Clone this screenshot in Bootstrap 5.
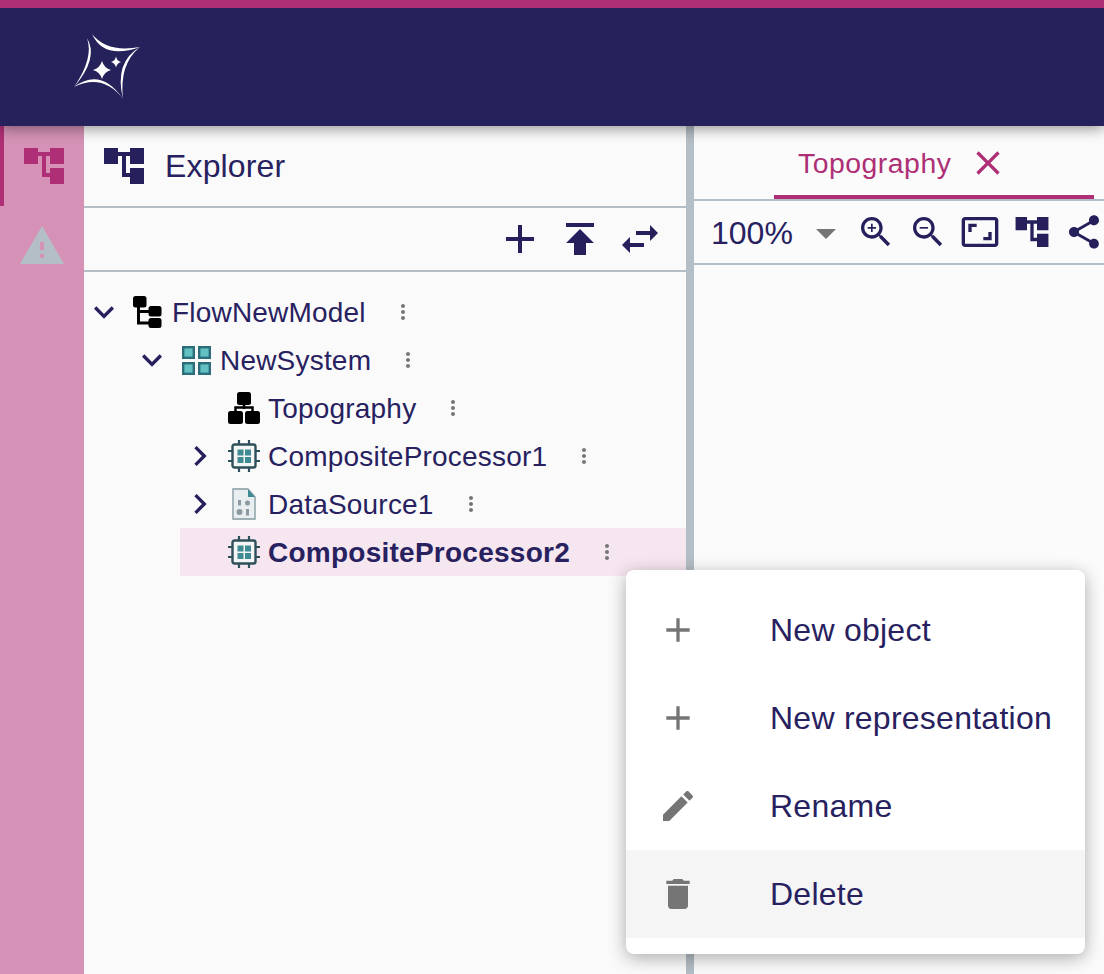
<!DOCTYPE html>
<html lang="en">
<head>
  <meta charset="UTF-8">
  <title>Explorer</title>
  <link href="https://cdn.jsdelivr.net/npm/bootstrap@5.3.2/dist/css/bootstrap.min.css" rel="stylesheet">
  <style>
    body {
      font-family: "Liberation Sans", Arial, sans-serif;
      color: #272160;
      background: #fafafa;
    }
    svg { display: block; flex: none; }
    .ico-navy { fill: #25205c; }
    .ico-grey { fill: #757575; }

    .app-header {
      height: 126px;
      flex: none;
      background: #25215a;
      border-top: 8px solid #ae2f76;
      padding-left: 74px;
      position: relative;
      z-index: 5;
      box-shadow: 0 2px 14px rgba(0, 0, 0, .45);
    }

    .app-rail { width: 84px; flex: none; background: #d592b6; }
    .rail-item { height: 80px; }
    .rail-item.active { border-left: 4px solid #ae2f76; }
    .rail-item.active svg { fill: #ae2f76; }

    .explorer-pane { width: 602px; flex: none; background: #fafafa; }
    .pane-title { height: 82px; border-bottom: 2px solid #b4bec6; padding-left: 20px; gap: 21px; font-size: 32px; letter-spacing: .15px; }
    .pane-tools { height: 64px; border-bottom: 2px solid #b4bec6; padding-right: 22px; gap: 12px; }

    .tree-list { padding-top: 16px; }
    .tree-row { height: 48px; font-size: 28px; letter-spacing: .2px; white-space: nowrap; }
    .tree-d1 { margin-left: 48px; }
    .tree-d2 { margin-left: 96px; }
    .tree-row.selected { background: #f6e6f0; font-weight: 700; letter-spacing: .25px; }
    .tree-twist { width: 40px; flex: none; }
    .tree-ico { width: 48px; flex: none; }
    .tree-label { margin-top: 2px; }
    .tree-more { margin-left: 25px; fill: #757575; }

    .pane-splitter { width: 8px; flex: none; background: #b4bec6; }

    .editor-pane { flex: 1 1 auto; min-width: 0; background: #fbfbfc; }
    .tab-strip { height: 75px; border-bottom: 2px solid #b4bec6; padding-left: 80px; }
    .editor-tab {
      width: 320px;
      height: 73px;
      border-bottom: 4px solid #ae2f76;
      color: #ae2f76;
      fill: #ae2f76;
      font-size: 28.4px;
      letter-spacing: .5px;
      padding-left: 24px;
      padding-top: 5px;
      gap: 17px;
    }
    .zoom-tools { height: 64px; border-bottom: 2px solid #b4bec6; padding-left: 17px; font-size: 32px; }
    .zoom-value { margin-top: 2px; }
    .zoom-caret { width: 0; height: 0; border-left: 10px solid transparent; border-right: 10px solid transparent; border-top: 10px solid #757575; margin: 4px 20px 0 23px; }
    .zoom-btns { gap: 12px; }

    .context-menu.dropdown-menu {
      left: 626px;
      top: 444px;
      width: 459px;
      padding: 16px 0;
      border: 0;
      border-radius: 8px;
      background: #fff;
      box-shadow: 0 4px 18px rgba(0, 0, 0, .32);
      z-index: 10;
    }
    .context-menu .dropdown-item {
      height: 88px;
      padding: 0 0 0 32px;
      gap: 72px;
      font-size: 32px;
      letter-spacing: .25px;
      color: #272160;
    }
    .context-menu .dropdown-item.hovered { background: #f5f5f5; }
  </style>
</head>
<body class="d-flex flex-column vh-100 overflow-hidden">
  <svg width="0" height="0" class="position-absolute">
    <defs>
      <symbol id="i-topo" viewBox="0 0 40 36">
        <path d="M0 0h14v16H0zM26 0h14v16H26zM26 20h14v16H26zM14 4h12v4h-4v17h4v4h-8V8h-4z"/>
      </symbol>
      <symbol id="i-chip" viewBox="0 0 32 32">
        <path d="M11 0v5M21 0v5M11 27v5M21 27v5M0 11h5M0 21h5M27 11h5M27 21h5" stroke="#2f4f5a" stroke-width="2.200" fill="none"/>
        <rect x="4.500" y="4.500" width="23" height="23" rx="2" fill="#f4f6f6" stroke="#2f4f5a" stroke-width="2.400"/>
        <path d="M9.500 9.500h6v6h-6zM17 9.500h6v6h-6zM9.500 17h6v6h-6zM17 17h6v6h-6z" fill="#3f8a93"/>
      </symbol>
    </defs>
  </svg>

  <header class="app-header d-flex align-items-center">
    <svg width="66" height="66" viewBox="0 0 66 66" fill="#fff">
      <path d="M18 0Q30 26 66 13Q33 19 18 0z"/>
      <path d="M66 13Q40 28 49 65Q45 30 66 13z"/>
      <path d="M49 65Q29 39 0 53Q27 33 49 65z"/>
      <path d="M0 53Q20 24 13 4Q25 24 0 53z"/>
      <path d="M28 27Q30 34 37 36Q30 38 28 45Q26 38 19 36Q26 34 28 27z"/>
      <path d="M42 22.500Q43 27 47 28Q43 29 42 33.500Q41 29 37 28Q41 27 42 22.500z"/>
    </svg>
  </header>

  <main class="d-flex flex-grow-1 position-relative" style="min-height:0">
    <nav class="app-rail">
      <div class="rail-item active d-flex align-items-center justify-content-center">
        <svg width="40" height="36"><use href="#i-topo"/></svg>
      </div>
      <div class="rail-item d-flex align-items-center justify-content-center">
        <svg width="48" height="48" viewBox="0 0 24 24" fill="#b4bec6"><path d="M1 21h22L12 2 1 21zm12-3h-2v-2h2v2zm0-4h-2v-4h2v4z"/></svg>
      </div>
    </nav>

    <section class="explorer-pane">
      <div class="pane-title d-flex align-items-center">
        <svg width="40" height="36" class="ico-navy"><use href="#i-topo"/></svg>
        <span>Explorer</span>
      </div>
      <div class="pane-tools d-flex align-items-center justify-content-end">
        <svg width="48" height="48" viewBox="0 0 24 24" class="ico-navy"><path d="M19 13h-6v6h-2v-6H5v-2h6V5h2v6h6v2z"/></svg>
        <svg width="48" height="48" viewBox="0 0 24 24" class="ico-navy"><path d="M5 4v2h14V4H5zm0 10h4v6h6v-6h4l-7-7-7 7z"/></svg>
        <svg width="48" height="48" viewBox="0 0 24 24" class="ico-navy"><path d="M6.990 11L3 15l3.990 4v-3H14v-2H6.990v-3zM21 9l-3.990-4v3H10v2h7.010v3L21 9z"/></svg>
      </div>

      <div class="tree-list">
        <div class="tree-row d-flex align-items-center">
          <svg class="tree-twist ico-navy" height="40" viewBox="0 0 24 24"><path d="M16.590 8.590L12 13.170 7.410 8.590 6 10l6 6 6-6z"/></svg>
          <span class="tree-ico d-flex">
            <svg width="30" height="32" viewBox="0 0 30 32" class="ms-2">
              <g fill="#000"><rect x="1" y="0" width="13.500" height="11.500" rx="2.500"/><rect x="16.500" y="10" width="13" height="10.500" rx="2.500"/><rect x="16.500" y="22" width="13" height="10" rx="2.500"/></g>
              <path d="M6.500 10v17h11M6.500 15.500h11" stroke="#000" stroke-width="3" fill="none"/>
            </svg>
          </span>
          <span class="tree-label">FlowNewModel</span>
          <svg class="tree-more" width="24" height="24" viewBox="0 0 24 24"><path d="M12 8c1.100 0 2-.9 2-2s-.9-2-2-2-2 .9-2 2 .9 2 2 2zm0 2c-1.100 0-2 .9-2 2s.9 2 2 2 2-.9 2-2-.9-2-2-2zm0 6c-1.100 0-2 .9-2 2s.9 2 2 2 2-.9 2-2-.9-2-2-2z"/></svg>
        </div>

        <div class="tree-row tree-d1 d-flex align-items-center">
          <svg class="tree-twist ico-navy" height="40" viewBox="0 0 24 24"><path d="M16.590 8.590L12 13.170 7.410 8.590 6 10l6 6 6-6z"/></svg>
          <span class="tree-ico d-flex">
            <svg width="30" height="29" viewBox="0 0 30 29" style="margin-left:10px" fill="#63c1c4" stroke="#2c6d7a" stroke-width="2.400">
              <rect x="1.200" y="1.200" width="10.600" height="10.600"/><rect x="17.200" y="1.200" width="10.600" height="10.600"/><rect x="1.200" y="17.200" width="10.600" height="10.600"/><rect x="17.200" y="17.200" width="10.600" height="10.600"/>
            </svg>
          </span>
          <span class="tree-label">NewSystem</span>
          <svg class="tree-more" width="24" height="24" viewBox="0 0 24 24"><path d="M12 8c1.100 0 2-.9 2-2s-.9-2-2-2-2 .9-2 2 .9 2 2 2zm0 2c-1.100 0-2 .9-2 2s.9 2 2 2 2-.9 2-2-.9-2-2-2zm0 6c-1.100 0-2 .9-2 2s.9 2 2 2 2-.9 2-2-.9-2-2-2z"/></svg>
        </div>

        <div class="tree-row tree-d2 d-flex align-items-center">
          <span class="tree-twist"></span>
          <span class="tree-ico d-flex">
            <svg width="32" height="32" viewBox="0 0 32 32" class="ms-2">
              <g fill="#000"><rect x="9" y="0" width="14" height="13" rx="2.500"/><rect x="0" y="19" width="15" height="13" rx="2.500"/><rect x="17" y="19" width="15" height="13" rx="2.500"/></g>
              <path d="M16 12v5M7.500 21v-5.500h17V21" stroke="#000" stroke-width="2.500" fill="none"/>
            </svg>
          </span>
          <span class="tree-label">Topography</span>
          <svg class="tree-more" width="24" height="24" viewBox="0 0 24 24"><path d="M12 8c1.100 0 2-.9 2-2s-.9-2-2-2-2 .9-2 2 .9 2 2 2zm0 2c-1.100 0-2 .9-2 2s.9 2 2 2 2-.9 2-2-.9-2-2-2zm0 6c-1.100 0-2 .9-2 2s.9 2 2 2 2-.9 2-2-.9-2-2-2z"/></svg>
        </div>

        <div class="tree-row tree-d2 d-flex align-items-center">
          <svg class="tree-twist ico-navy" height="40" viewBox="0 0 24 24"><path d="M10 6L8.590 7.410 13.170 12l-4.580 4.590L10 18l6-6z"/></svg>
          <span class="tree-ico d-flex">
            <svg width="32" height="32" class="ms-2"><use href="#i-chip"/></svg>
          </span>
          <span class="tree-label">CompositeProcessor1</span>
          <svg class="tree-more" width="24" height="24" viewBox="0 0 24 24"><path d="M12 8c1.100 0 2-.9 2-2s-.9-2-2-2-2 .9-2 2 .9 2 2 2zm0 2c-1.100 0-2 .9-2 2s.9 2 2 2 2-.9 2-2-.9-2-2-2zm0 6c-1.100 0-2 .9-2 2s.9 2 2 2 2-.9 2-2-.9-2-2-2z"/></svg>
        </div>

        <div class="tree-row tree-d2 d-flex align-items-center">
          <svg class="tree-twist ico-navy" height="40" viewBox="0 0 24 24"><path d="M10 6L8.590 7.410 13.170 12l-4.580 4.590L10 18l6-6z"/></svg>
          <span class="tree-ico d-flex">
            <svg width="24" height="32" viewBox="0 0 24 32" style="margin-left:12px">
              <path d="M1 1h15l7 8v22H1z" fill="#e9eef0" stroke="#9fb0b5" stroke-width="1.800" stroke-linejoin="round"/>
              <path d="M16 1l7 8h-7z" fill="#3f8a93"/>
              <g fill="#8b9aa0"><rect x="6" y="12" width="3" height="5.500"/><circle cx="15.500" cy="15" r="2.500"/><circle cx="7.500" cy="24" r="3"/><rect x="14" y="21" width="3" height="6.500"/></g>
            </svg>
          </span>
          <span class="tree-label">DataSource1</span>
          <svg class="tree-more" width="24" height="24" viewBox="0 0 24 24"><path d="M12 8c1.100 0 2-.9 2-2s-.9-2-2-2-2 .9-2 2 .9 2 2 2zm0 2c-1.100 0-2 .9-2 2s.9 2 2 2 2-.9 2-2-.9-2-2-2zm0 6c-1.100 0-2 .9-2 2s.9 2 2 2 2-.9 2-2-.9-2-2-2z"/></svg>
        </div>

        <div class="tree-row tree-d2 selected d-flex align-items-center">
          <span class="tree-twist"></span>
          <span class="tree-ico d-flex">
            <svg width="32" height="32" class="ms-2"><use href="#i-chip"/></svg>
          </span>
          <span class="tree-label">CompositeProcessor2</span>
          <svg class="tree-more" width="24" height="24" viewBox="0 0 24 24"><path d="M12 8c1.100 0 2-.9 2-2s-.9-2-2-2-2 .9-2 2 .9 2 2 2zm0 2c-1.100 0-2 .9-2 2s.9 2 2 2 2-.9 2-2-.9-2-2-2zm0 6c-1.100 0-2 .9-2 2s.9 2 2 2 2-.9 2-2-.9-2-2-2z"/></svg>
        </div>
      </div>
    </section>

    <div class="pane-splitter"></div>

    <section class="editor-pane">
      <div class="tab-strip">
        <div class="editor-tab d-flex align-items-center">
          <span>Topography</span>
          <svg width="40" height="40" viewBox="0 0 24 24"><path d="M19 6.410L17.590 5 12 10.590 6.410 5 5 6.410 10.590 12 5 17.590 6.410 19 12 13.410 17.590 19 19 17.590 13.410 12z"/></svg>
        </div>
      </div>
      <div class="zoom-tools d-flex align-items-center">
        <span class="zoom-value">100%</span>
        <span class="zoom-caret"></span>
        <div class="zoom-btns d-flex align-items-center">
          <svg width="40" height="40" viewBox="0 0 24 24" class="ico-navy"><path d="M15.500 14h-.79l-.28-.27C15.410 12.590 16 11.110 16 9.500 16 5.910 13.090 3 9.500 3S3 5.910 3 9.500 5.910 16 9.500 16c1.610 0 3.090-.59 4.230-1.570l.27.28v.79l5 4.990L20.490 19l-4.990-5zm-6 0C7.010 14 5 11.990 5 9.500S7.010 5 9.500 5 14 7.010 14 9.500 11.990 14 9.500 14z"/><path d="M12 10h-2v2H9v-2H7V9h2V7h1v2h2v1z"/></svg>
          <svg width="40" height="40" viewBox="0 0 24 24" class="ico-navy"><path d="M15.500 14h-.79l-.28-.27C15.410 12.590 16 11.110 16 9.500 16 5.910 13.090 3 9.500 3S3 5.910 3 9.500 5.910 16 9.500 16c1.610 0 3.090-.59 4.230-1.570l.27.28v.79l5 4.990L20.490 19l-4.990-5zm-6 0C7.010 14 5 11.990 5 9.500S7.010 5 9.500 5 14 7.010 14 9.500 11.990 14 9.500 14z"/><path d="M7 9h5v1H7z"/></svg>
          <svg width="40" height="40" viewBox="0 0 24 24" class="ico-navy"><path d="M19 12h-2v3h-3v2h5v-5zM7 9h3V7H5v5h2V9zm14-6H3c-1.100 0-2 .9-2 2v14c0 1.100.9 2 2 2h18c1.100 0 2-.9 2-2V5c0-1.100-.9-2-2-2zm0 16.010H3V4.990h18v14.020z"/></svg>
          <svg width="40" height="40" viewBox="0 0 40 40" class="ico-navy"><svg x="3" y="5" width="34" height="30" viewBox="0 0 40 36"><use href="#i-topo"/></svg></svg>
          <svg width="40" height="40" viewBox="0 0 24 24" class="ico-navy"><path d="M18 16.080c-.76 0-1.440.3-1.960.77L8.910 12.700c.05-.23.09-.46.09-.7s-.04-.47-.09-.7l7.050-4.110c.54.5 1.250.81 2.040.81 1.660 0 3-1.340 3-3s-1.340-3-3-3-3 1.340-3 3c0 .24.04.47.09.7L8.040 9.810C7.500 9.310 6.790 9 6 9c-1.660 0-3 1.340-3 3s1.340 3 3 3c.79 0 1.500-.31 2.040-.81l7.120 4.160c-.05.21-.08.43-.08.65 0 1.610 1.310 2.920 2.920 2.920 1.610 0 2.920-1.310 2.920-2.920s-1.310-2.920-2.920-2.920z"/></svg>
        </div>
      </div>
    </section>

    <div class="context-menu dropdown-menu show">
      <a class="dropdown-item d-flex align-items-center" href="#">
        <svg width="40" height="40" viewBox="0 0 24 24" class="ico-grey"><path d="M19 13h-6v6h-2v-6H5v-2h6V5h2v6h6v2z"/></svg>
        <span>New object</span>
      </a>
      <a class="dropdown-item d-flex align-items-center" href="#">
        <svg width="40" height="40" viewBox="0 0 24 24" class="ico-grey"><path d="M19 13h-6v6h-2v-6H5v-2h6V5h2v6h6v2z"/></svg>
        <span>New representation</span>
      </a>
      <a class="dropdown-item d-flex align-items-center" href="#">
        <svg width="40" height="40" viewBox="0 0 24 24" class="ico-grey"><path d="M3 17.250V21h3.750L17.810 9.940l-3.750-3.750L3 17.250zM20.710 7.040c.39-.39.39-1.020 0-1.410l-2.340-2.340c-.39-.39-1.020-.39-1.410 0l-1.830 1.830 3.750 3.750 1.830-1.830z"/></svg>
        <span>Rename</span>
      </a>
      <a class="dropdown-item hovered d-flex align-items-center" href="#">
        <svg width="40" height="40" viewBox="0 0 24 24" class="ico-grey"><path d="M6 19c0 1.100.9 2 2 2h8c1.100 0 2-.9 2-2V7H6v12zM19 4h-3.500l-1-1h-5l-1 1H5v2h14V4z"/></svg>
        <span>Delete</span>
      </a>
    </div>
  </main>

  <script src="https://cdn.jsdelivr.net/npm/bootstrap@5.3.2/dist/js/bootstrap.bundle.min.js"></script>
</body>
</html>
